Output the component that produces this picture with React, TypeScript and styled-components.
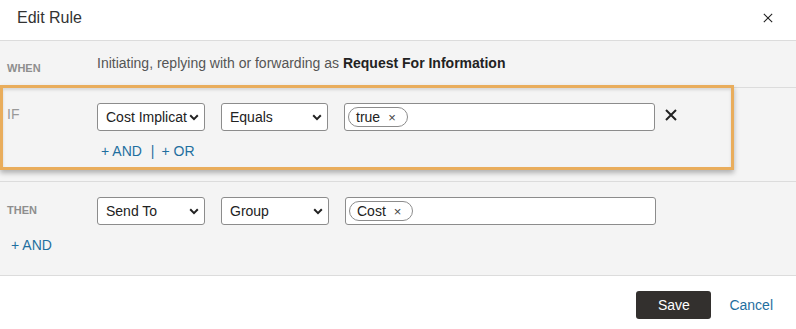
import React from "react";
import styled, { createGlobalStyle } from "styled-components";

const GlobalStyle = createGlobalStyle`
	body {
		margin: 0;
		background: #ffffff;
		font-family: "Liberation Sans", Arial, sans-serif;
	}
`;

const Chevron = () => (
	<svg width="10" height="7" viewBox="0 0 10 7" style={{ flex: "none" }}>
		<path d="M1.2 1.3 L5 5.1 L8.8 1.3" fill="none" stroke="#222" strokeWidth="2" />
	</svg>
);

const CloseIcon = ({ size, stroke }: { size: number; stroke: number }) => (
	<svg width={size} height={size} viewBox="0 0 12 12">
		<path d="M1 1 L11 11 M11 1 L1 11" stroke="#222" strokeWidth={stroke} fill="none" />
	</svg>
);

const Select = ({ label, width }: { label: string; width: number }) => (
	<SelectBox $width={width}>
		<SelectText>{label}</SelectText>
		<Chevron />
	</SelectBox>
);

const Chip = ({ label }: { label: string }) => (
	<ChipItem>
		{label}
		<ChipX>×</ChipX>
	</ChipItem>
);

const App = () => {
	return (
		<Dialog>
			<GlobalStyle />
			<Header>
				<Title>Edit Rule</Title>
				<HeaderClose>
					<CloseIcon size={10} stroke={1.3} />
				</HeaderClose>
			</Header>

			<Body>
				<WhenSection>
					<Label $bold>WHEN</Label>
					<WhenText>
						Initiating, replying with or forwarding as <strong>Request For Information</strong>
					</WhenText>
				</WhenSection>

				<Section>
					<Highlight />
					<Row>
						<Label>IF</Label>
						<Controls>
							<Select label="Cost Implicat" width={108} />
							<Select label="Equals" width={107} />
							<TagInput>
								<Chip label="true" />
							</TagInput>
							<RemoveBtn>
								<CloseIcon size={12} stroke={2} />
							</RemoveBtn>
						</Controls>
					</Row>
					<Links $indent={101}>
						<LinkText>+ AND</LinkText>
						<Pipe>|</Pipe>
						<LinkText>+ OR</LinkText>
					</Links>
				</Section>

				<Section>
					<Row>
						<Label $bold>THEN</Label>
						<Controls>
							<Select label="Send To" width={108} />
							<Select label="Group" width={108} />
							<TagInput>
								<Chip label="Cost" />
							</TagInput>
						</Controls>
					</Row>
					<Links $indent={11}>
						<LinkText>+ AND</LinkText>
					</Links>
				</Section>
			</Body>

			<Footer>
				<SaveBtn>Save</SaveBtn>
				<CancelLink>Cancel</CancelLink>
			</Footer>
		</Dialog>
	);
};

const Dialog = styled.div`
	width: 796px;
	height: 329px;
	background: #fff;
	color: #333;
	font-size: 14px;
	overflow: hidden;
`;

const Header = styled.div`
	display: flex;
	justify-content: space-between;
	align-items: center;
	height: 40px;
	padding: 0 23px 0 17px;
	border-bottom: 1px solid #dcdcdc;
`;

const Title = styled.div`
	font-size: 16px;
	color: #333;
	margin-top: -4px;
`;

const HeaderClose = styled.div`
	display: flex;
	margin-top: -4px;
`;

const Body = styled.div`
	background: #f4f4f4;
`;

const WhenSection = styled.div`
	display: flex;
	align-items: center;
	height: 46px;
	padding-left: 7px;
	border-bottom: 1px solid #dcdcdc;
`;

const WhenText = styled.div`
	color: #555;
	font-size: 14px;
	margin-top: -2px;

	strong {
		color: #222;
	}
`;

const Section = styled.div`
	position: relative;
	display: flex;
	flex-direction: column;
	height: 94px;
	padding-top: 15px;
	box-sizing: border-box;
	border-bottom: 1px solid #dcdcdc;
`;

const Highlight = styled.div`
	position: absolute;
	top: -3px;
	left: 0;
	width: 734px;
	height: 85px;
	box-sizing: border-box;
	border: 3px solid #e9ad5c;
	box-shadow: 0 3px 5px rgba(0, 0, 0, 0.28), inset 0 2px 3px rgba(0, 0, 0, 0.12);
	pointer-events: none;
`;

const Row = styled.div`
	display: flex;
	align-items: flex-start;
	padding-left: 7px;
`;

const Label = styled.div<{ $bold?: boolean }>`
	width: 90px;
	flex: none;
	font-size: ${(p) => (p.$bold ? "11px" : "14px")};
	font-weight: ${(p) => (p.$bold ? "bold" : "normal")};
	color: ${(p) => (p.$bold ? "#8e8e8e" : "#999")};
	padding-top: ${(p) => (p.$bold ? "7px" : "3px")};
`;

const Controls = styled.div`
	display: flex;
	align-items: center;
	gap: 16px;
`;

const SelectBox = styled.div<{ $width: number }>`
	display: flex;
	align-items: center;
	justify-content: space-between;
	width: ${(p) => p.$width}px;
	height: 28px;
	box-sizing: border-box;
	padding: 0 5px 0 8px;
	background: #fff;
	border: 1px solid #8c8c8c;
	border-radius: 3px;
	color: #222;
	font-size: 14px;
`;

const SelectText = styled.span`
	white-space: nowrap;
	margin-right: 2px;
`;

const TagInput = styled.div`
	display: flex;
	align-items: center;
	width: 311px;
	height: 28px;
	box-sizing: border-box;
	padding-left: 3px;
	background: #fff;
	border: 1px solid #8c8c8c;
	border-radius: 3px;
`;

const ChipItem = styled.div`
	display: flex;
	align-items: center;
	height: 20px;
	box-sizing: border-box;
	padding: 0 11px 0 7px;
	border: 1px solid #8c8c8c;
	border-radius: 10px;
	color: #222;
	font-size: 14px;
`;

const ChipX = styled.span`
	margin-left: 8px;
	font-size: 13px;
	color: #444;
`;

const RemoveBtn = styled.div`
	display: flex;
	margin-left: -6px;
	margin-top: -4px;
`;

const Links = styled.div<{ $indent: number }>`
	display: flex;
	align-items: center;
	margin-top: 12px;
	padding-left: ${(p) => p.$indent}px;
	color: #1f6f9f;
	font-size: 14px;
`;

const LinkText = styled.span`
	color: #1f6f9f;
`;

const Pipe = styled.span`
	margin: 0 7px 0 9px;
`;

const Footer = styled.div`
	display: flex;
	justify-content: flex-end;
	align-items: center;
	padding: 15px 23px 0 0;
`;

const SaveBtn = styled.button`
	width: 75px;
	height: 28px;
	border: none;
	border-radius: 3px;
	background: #33302e;
	color: #fff;
	font-family: inherit;
	font-size: 14px;
	padding: 0;
`;

const CancelLink = styled.span`
	margin-left: 18px;
	color: #1f6f9f;
	font-size: 14px;
`;

export default App;
